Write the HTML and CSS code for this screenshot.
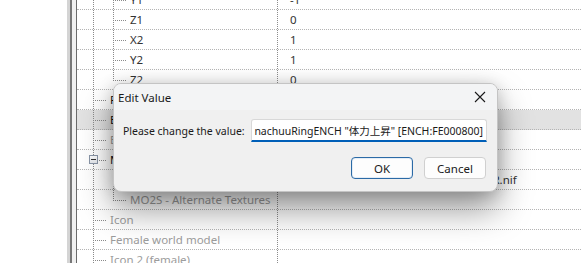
FILE: index.html
```html
<!DOCTYPE html>
<html lang="en">
<head>
    <meta charset="UTF-8">
    <title>Edit Value</title>
    <link rel="stylesheet" href="styles.css">
</head>
<body>
    <div class="app">
        <div class="side"></div>
        <div class="splitter"></div>

        <div class="tree">
            <div class="row">
                <div class="name"><span class="g v"></span><span class="g v t"></span>Y1</div>
                <div class="val">-1</div>
            </div>
            <div class="row">
                <div class="name"><span class="g v"></span><span class="g v t"></span>Z1</div>
                <div class="val">0</div>
            </div>
            <div class="row">
                <div class="name"><span class="g v"></span><span class="g v t"></span>X2</div>
                <div class="val">1</div>
            </div>
            <div class="row">
                <div class="name"><span class="g v"></span><span class="g v t"></span>Y2</div>
                <div class="val">1</div>
            </div>
            <div class="row">
                <div class="name"><span class="g v"></span><span class="g end t"></span>Z2</div>
                <div class="val">0</div>
            </div>
            <div class="row">
                <div class="name strong"><span class="g v t"></span>Primary slot</div>
                <div class="val"></div>
            </div>
            <div class="row selected">
                <div class="name strong"><span class="g v t"></span>Biped model</div>
                <div class="val"></div>
            </div>
            <div class="row">
                <div class="name muted"><span class="g v t"></span>Editor ID</div>
                <div class="val"></div>
            </div>
            <div class="row">
                <div class="name strong"><span class="g v t"><i class="box"></i></span>Male world model</div>
                <div class="val"></div>
            </div>
            <div class="row">
                <div class="name"><span class="g v"></span><span class="g v t"></span>MOD2 - Model Filename</div>
                <div class="val">Armor\Jewelry\Rings\Nachuu\nachuuR.nif</div>
            </div>
            <div class="row">
                <div class="name muted"><span class="g v"></span><span class="g end t"></span>MO2S - Alternate Textures</div>
                <div class="val"></div>
            </div>
            <div class="row">
                <div class="name muted"><span class="g v t"></span>Icon</div>
                <div class="val"></div>
            </div>
            <div class="row">
                <div class="name muted"><span class="g v t"></span>Female world model</div>
                <div class="val"></div>
            </div>
            <div class="row">
                <div class="name muted"><span class="g v t"></span>Icon 2 (female)</div>
                <div class="val"></div>
            </div>
        </div>
    </div>

    <div class="dialog">
        <div class="dialog-title">
            <span>Edit Value</span>
            <svg class="close" width="12" height="12" viewBox="0 0 12 12">
                <path d="M1 1 L11 11 M11 1 L1 11" stroke="#1a1a1a" stroke-width="1.1" fill="none"/>
            </svg>
        </div>
        <div class="dialog-body">
            <div class="field">
                <label>Please change the value:</label>
                <div class="input"><span>nachuuRingENCH "体力上昇" [ENCH:FE000800]</span></div>
            </div>
            <div class="buttons">
                <button class="btn default">OK</button>
                <button class="btn">Cancel</button>
            </div>
        </div>
    </div>
</body>
</html>
```

FILE: styles.css
```css
body {
    margin: 0;
    background: #fff;
    font-family: "Noto Sans", "Noto Sans CJK JP", sans-serif;
    font-size: 11.5px;
    color: #222;
    overflow: hidden;
}
.app {
    display: flex;
    height: 263px;
    overflow: hidden;
}
.side {
    width: 67px;
    background: #fff;
}
.splitter {
    width: 10px;
    box-sizing: border-box;
    background: #f0f0f0;
    border-left: 3px solid #d4d4d4;
    border-right: 1px solid #6a6a6a;
    box-shadow: inset 2px 0 0 #777;
}
.tree {
    flex: 1;
    margin-top: -10px;
}
.row {
    display: flex;
    height: 20px;
    box-sizing: border-box;
    border-bottom: 1px dotted #b4b4b4;
}
.row.selected {
    background: #e2e2e2;
}
.name {
    width: 201px;
    box-sizing: border-box;
    padding-left: 16px;
    display: flex;
    align-items: center;
    white-space: nowrap;
    border-right: 1px dotted #8c8c8c;
    color: #333;
}
.name.strong {
    color: #111;
}
.name.muted {
    color: #9c9c9c;
}
.val {
    flex: 1;
    padding-left: 12px;
    display: flex;
    align-items: center;
    white-space: nowrap;
    color: #333;
}

/* tree guides */
.g {
    width: 20px;
    height: 20px;
    flex: none;
    display: flex;
    align-items: center;
    background-repeat: no-repeat;
}
.g.t {
    width: 17px;
}
.g.v {
    background-image: repeating-linear-gradient(to bottom, #8a8a8a 0 1px, transparent 1px 2px);
    background-size: 1px 20px;
    background-position: 0 0;
}
.g.end {
    background-image: repeating-linear-gradient(to bottom, #8a8a8a 0 1px, transparent 1px 2px);
    background-size: 1px 10px;
    background-position: 0 0;
}
.g.v.t, .g.end.t {
    background-image:
        repeating-linear-gradient(to bottom, #8a8a8a 0 1px, transparent 1px 2px),
        repeating-linear-gradient(to right, #8a8a8a 0 1px, transparent 1px 2px);
    background-position: 0 0, 0 10px;
}
.g.v.t {
    background-size: 1px 20px, 13px 1px;
}
.g.end.t {
    background-size: 1px 10px, 13px 1px;
}
.box {
    width: 9px;
    height: 9px;
    margin-left: -4px;
    box-sizing: border-box;
    border: 1px solid #8a96a8;
    background: linear-gradient(#fff, #e6e9ee);
    position: relative;
}
.box::after {
    content: "";
    position: absolute;
    left: 1px;
    right: 1px;
    top: 3px;
    height: 1px;
    background: #333;
}

/* dialog */
.dialog {
    position: absolute;
    left: 113px;
    top: 83px;
    width: 385px;
    height: 109px;
    box-sizing: border-box;
    background: #f0f0f0;
    border: 1px solid #c4c4c4;
    border-radius: 8px;
    overflow: hidden;
    box-shadow: 0 18px 34px rgba(0, 0, 0, 0.4), 0 2px 16px rgba(0, 0, 0, 0.18);
}
.dialog-title {
    height: 26px;
    display: flex;
    align-items: center;
    justify-content: space-between;
    padding: 0 11px 0 4px;
    background: #f3f4f5;
    color: #1a1a1a;
}
.dialog-body {
    padding: 9px 10px 0 9px;
    font-size: 10.5px;
}
.field {
    display: flex;
    align-items: center;
    gap: 6px;
}
.field label {
    flex: none;
    white-space: nowrap;
    color: #1a1a1a;
}
.input {
    flex: 1;
    min-width: 0;
    height: 23px;
    box-sizing: border-box;
    background: #fff;
    border: 1px solid #d8d8d8;
    border-bottom: 2px solid #005fb8;
    border-radius: 3px 3px 0 0;
    display: flex;
    align-items: center;
    justify-content: flex-end;
    padding: 0 3px 0 2px;
    overflow: hidden;
    white-space: nowrap;
    color: #1a1a1a;
}
.input span {
    flex: none;
}
.buttons {
    display: flex;
    justify-content: flex-end;
    gap: 11px;
    margin-top: 15px;
    padding-right: 1px;
}
.btn {
    width: 62px;
    height: 22px;
    font: inherit;
    font-size: 11.5px;
    color: #1a1a1a;
    background: #fdfdfd;
    border: 1px solid #d0d0d0;
    border-radius: 4px;
    padding: 0;
}
.btn.default {
    border-color: #2b6aa6;
    box-shadow: inset 0 0 0 1px #e4edf6;
}
```
